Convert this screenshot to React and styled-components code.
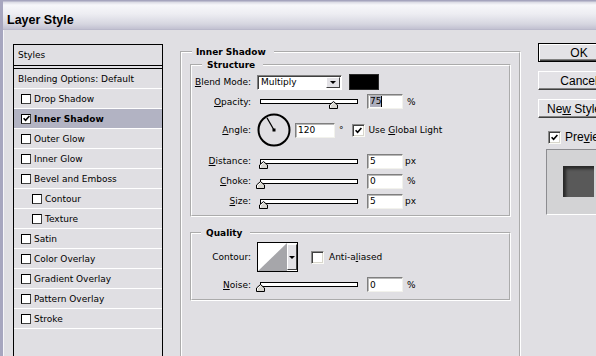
import React from "react";
import styled, { createGlobalStyle } from "styled-components";

const GlobalStyle = createGlobalStyle`
  html, body { margin: 0; padding: 0; background: #e0dfe3; }
  body {
    overflow: hidden;
    font-family: "DejaVu Sans", "Liberation Sans", sans-serif;
    font-size: 9px;
    color: #000;
  }
`;

const Window = styled.div`
  width: 596px;
  height: 356px;
  box-sizing: border-box;
  overflow: hidden;
  display: flex;
  flex-direction: column;
  background: #e0dfe3;
  border-left: 3px solid #a7a6bf;
`;

const TitleBar = styled.div`
  flex: none;
  height: 30px;
  box-sizing: border-box;
  padding: 13px 0 0 4px;
  background: linear-gradient(
    180deg,
    #a5a4bd 0px,
    #a5a4bd 1px,
    #d9d9e3 2px,
    #f7f7fa 5px,
    #ededf2 14px,
    #d6d6e0 24px,
    #c2c1d1 29px,
    #b2b1c4 30px
  );
  font: bold 12.5px/14px "Liberation Sans", Arial, sans-serif;
  color: #000;
`;

const Body = styled.div`
  flex: 1;
  min-height: 0;
  display: flex;
  align-items: flex-start;
  gap: 17px;
  padding: 14px 0 0 10px;
  box-shadow: inset 1px 0 0 #f6f6f9;
`;

/* ---------- left style list ---------- */

const Panel = styled.div`
  flex: none;
  width: 150px;
  height: 330px;
  box-sizing: border-box;
  border: 1px solid #000;
  display: flex;
  flex-direction: column;
`;

const PanelHeader = styled.div`
  flex: none;
  height: 21px;
  box-sizing: border-box;
  border-bottom: 1px solid #000;
  margin-bottom: 2px;
  display: flex;
  align-items: center;
  padding-left: 4px;
`;

const BlendRow = styled.div`
  flex: none;
  height: 21px;
  box-sizing: border-box;
  border-top: 1px solid #000;
  border-bottom: 1px solid #fff;
  display: flex;
  align-items: center;
  padding-left: 4px;
`;

const StyleRow = styled.div`
  flex: none;
  height: 20px;
  box-sizing: border-box;
  border-bottom: 1px solid #fff;
  display: flex;
  align-items: center;
  gap: 3px;
  padding-left: ${(p) => (p.$sub ? 18 : 7)}px;
  background: ${(p) => (p.$selected ? "#b2b3c3" : "transparent")};
  font-weight: ${(p) => (p.$selected ? "bold" : "normal")};
`;

const ListBox = styled.span`
  flex: none;
  width: 10px;
  height: 10px;
  box-sizing: border-box;
  border: 1px solid #000;
  border-right-color: #404040;
  border-bottom-color: #404040;
  background: #fff;
  display: flex;
  align-items: center;
  justify-content: center;
`;

const CheckMark = () => (
  <svg width="7" height="7" viewBox="0 0 7 7">
    <path d="M0.6 3.2 L2.6 5.3 L6.4 1.0" fill="none" stroke="#000" strokeWidth="1.6" />
  </svg>
);

/* ---------- fieldsets ---------- */

const Group = styled.fieldset`
  flex: none;
  width: ${(p) => p.$w}px;
  ${(p) => (p.$h ? `height: ${p.$h}px;` : "")}
  box-sizing: border-box;
  min-width: 0;
  margin: ${(p) => p.$mt || 0}px 0 0;
  padding: ${(p) => p.$pad};
  border: 2px groove #fff;
  display: flex;
  flex-direction: column;
`;

const Legend = styled.legend`
  font-weight: bold;
  line-height: 12px;
  padding: 0 8px 0 ${(p) => p.$pl}px;
  margin-left: ${(p) => p.$ml}px;
`;

const Row = styled.div`
  flex: none;
  height: ${(p) => p.$h}px;
  margin-top: ${(p) => p.$mt || 0}px;
  display: flex;
  align-items: center;
`;

const Label = styled.span`
  flex: none;
  width: 59px;
  margin-right: 6px;
  text-align: right;
  white-space: nowrap;
`;

const Key = styled.u`
  text-decoration: underline;
  text-underline-offset: 1px;
`;

const Select = styled.div`
  flex: none;
  width: 85px;
  height: 15px;
  box-sizing: border-box;
  display: flex;
  align-items: stretch;
  background: #fff;
  border: 1px solid;
  border-color: #808080 #fff #fff #808080;
  box-shadow: inset 1px 1px 0 #404040;
`;

const SelectText = styled.span`
  flex: 1;
  display: flex;
  align-items: center;
  padding-left: 3px;
`;

const DropButton = styled.span`
  flex: none;
  width: ${(p) => p.$w || 14}px;
  box-sizing: border-box;
  margin: 1px 1px 1px 0;
  background: #e3e2e6;
  border: 1px solid;
  border-color: #fff #404040 #404040 #fff;
  display: flex;
  align-items: center;
  justify-content: center;
`;

const Arrow = styled.span`
  width: 0;
  height: 0;
  border-left: 3px solid transparent;
  border-right: 3px solid transparent;
  border-top: 3px solid #000;
`;

const ColorSwatch = styled.span`
  flex: none;
  width: 30px;
  height: 16px;
  margin-left: 7px;
  box-sizing: border-box;
  background: #000;
  border: 1px solid #2a2a2a;
`;

const SliderWrap = styled.div`
  flex: none;
  position: relative;
  width: 104px;
  height: 15px;
`;

const Track = styled.div`
  margin: 5px 3px 0;
  height: 5px;
  box-sizing: border-box;
  border: 1px solid #000;
  background: #fff;
`;

const ThumbSvg = styled.svg`
  position: absolute;
  top: 7px;
`;

const Field = styled.div`
  flex: none;
  width: ${(p) => p.$w}px;
  height: 15px;
  margin-left: ${(p) => p.$ml}px;
  box-sizing: border-box;
  background: #fff;
  border: 1px solid;
  border-color: #7f7f7f #f2f2ec #f2f2ec #7f7f7f;
  box-shadow: inset 1px 1px 0 #b8b8b8;
  display: flex;
  align-items: center;
  padding-left: 2px;
`;

const Selected = styled.span`
  background: #aeafbd;
  line-height: 11px;
`;

const Caret = styled.span`
  width: 1px;
  height: 11px;
  background: #000;
`;

const Unit = styled.span`
  margin-left: ${(p) => p.$ml}px;
`;

const WinCheck = styled.span`
  flex: none;
  width: 13px;
  height: 13px;
  margin-left: ${(p) => p.$ml || 0}px;
  box-sizing: border-box;
  background: #fff;
  border: 1px solid;
  border-color: #8a8a8a #fbfbf6 #fbfbf6 #8a8a8a;
  box-shadow: inset 1px 1px 0 #404040, inset -1px -1px 0 #d8d6cc;
  display: flex;
  align-items: center;
  justify-content: center;
`;

const CheckText = styled.span`
  margin-left: ${(p) => p.$ml}px;
  white-space: nowrap;
`;

const ContourBox = styled.div`
  flex: none;
  width: 41px;
  height: 30px;
  box-sizing: border-box;
  border: 1px solid #000;
  display: flex;
  background: #fff;
`;

const ContourThumb = styled.svg`
  flex: none;
  display: block;
`;

/* ---------- right column ---------- */

const Side = styled.div`
  flex: none;
  width: 82px;
  margin-top: -1px;
  display: flex;
  flex-direction: column;
`;

const Button = styled.button`
  flex: none;
  height: 19px;
  width: 82px;
  padding: 0;
  margin: ${(p) => (p.$first ? 0 : 9)}px 0 0;
  box-sizing: border-box;
  display: flex;
  align-items: center;
  justify-content: center;
  white-space: nowrap;
  font: 12px "Liberation Sans", Arial, sans-serif;
  color: #000;
  background: #e3e2e6;
  border: 1px solid;
  border-color: ${(p) => (p.$default ? "#000" : "#fff #404040 #404040 #fff")};
  box-shadow: ${(p) =>
    p.$default
      ? "inset 1px 1px 0 #fff, inset -1px -1px 0 #404040, inset -2px -2px 0 #808080"
      : "inset -1px -1px 0 #808080"};
`;

const PreviewRow = styled.div`
  flex: none;
  display: flex;
  align-items: center;
  margin: 12px 0 0 10px;
  font: 12px "Liberation Sans", Arial, sans-serif;
`;

const PreviewBox = styled.div`
  flex: none;
  margin: 5px 0 0 8px;
  width: 66px;
  height: 66px;
  box-sizing: border-box;
  border: 1px solid;
  border-color: #8c8c90 #fff #fff #8c8c90;
  background: #d3d3d5;
  padding: 16px 0 0 16px;
`;

const PreviewSquare = styled.div`
  width: 31px;
  height: 31px;
  background: #595959;
  box-shadow: inset 3px 3px 3px rgba(0, 0, 0, 0.55);
`;

/* ---------- parts ---------- */

const Slider = ({ pct }) => (
  <SliderWrap>
    <Track />
    <ThumbSvg width="9" height="8" viewBox="0 0 9 8" style={{ left: 3 + pct * 98 - 4.5 }}>
      <path d="M4.5 0.5 L8.5 4 L8.5 7.5 L0.5 7.5 L0.5 4 Z" fill="#d8d6d0" stroke="#000" strokeWidth="1" />
      <path d="M4.5 1.8 L1.5 4.4 L1.5 6.5" fill="none" stroke="#fff" strokeWidth="1" />
    </ThumbSvg>
  </SliderWrap>
);

const Dial = ({ angle }) => {
  const r = (angle * Math.PI) / 180;
  const c = 17;
  return (
    <svg width="34" height="34" viewBox="0 0 34 34" style={{ flex: "none" }}>
      <circle cx={c} cy={c} r="15.5" fill="none" stroke="#000" strokeWidth="2" />
      <line x1={c} y1={c} x2={c + 14 * Math.cos(r)} y2={c - 14 * Math.sin(r)} stroke="#000" strokeWidth="1.2" />
      <rect x={c - 1.5} y={c - 1.5} width="3" height="3" fill="#000" />
    </svg>
  );
};

const styleItems = [
  { name: "Drop Shadow" },
  { name: "Inner Shadow", checked: true, selected: true },
  { name: "Outer Glow" },
  { name: "Inner Glow" },
  { name: "Bevel and Emboss" },
  { name: "Contour", sub: true },
  { name: "Texture", sub: true },
  { name: "Satin" },
  { name: "Color Overlay" },
  { name: "Gradient Overlay" },
  { name: "Pattern Overlay" },
  { name: "Stroke" },
];

const SliderRow = ({ k, rest, pct, value, unit, unitMl, mt, h = 20 }) => (
  <Row $h={h} $mt={mt}>
    <Label>
      <Key>{k}</Key>
      {rest}
    </Label>
    <Slider pct={pct} />
    <Field $w={36} $ml={6}>{value}</Field>
    <Unit $ml={unitMl}>{unit}</Unit>
  </Row>
);

export default function App() {
  return (
    <>
      <GlobalStyle />
      <Window>
        <TitleBar>Layer Style</TitleBar>
        <Body>
          <Panel>
            <PanelHeader>Styles</PanelHeader>
            <BlendRow>Blending Options: Default</BlendRow>
            {styleItems.map((s) => (
              <StyleRow key={s.name} $sub={s.sub} $selected={s.selected}>
                <ListBox>{s.checked && <CheckMark />}</ListBox>
                {s.name}
              </StyleRow>
            ))}
          </Panel>

          <Group $w={341} $h={330} $mt={2} $pad="1px 8px 0 8px">
            <Legend $ml={2} $pl={4}>Inner Shadow</Legend>

            <Group $w={321} $pad="3px 0 4px 0">
              <Legend $ml={10} $pl={5}>Structure</Legend>
              <Row $h={16}>
                <Label>
                  <Key>B</Key>lend Mode:
                </Label>
                <Select>
                  <SelectText>Multiply</SelectText>
                  <DropButton>
                    <Arrow />
                  </DropButton>
                </Select>
                <ColorSwatch />
              </Row>
              <Row $h={23}>
                <Label>
                  <Key>O</Key>pacity:
                </Label>
                <Slider pct={0.75} />
                <Field $w={36} $ml={6}>
                  <Selected>75</Selected>
                  <Caret />
                </Field>
                <Unit $ml={4}>%</Unit>
              </Row>
              <Row $h={34}>
                <Label>
                  <Key>A</Key>ngle:
                </Label>
                <Dial angle={120} />
                <Field $w={40} $ml={4}>120</Field>
                <Unit $ml={4}>°</Unit>
                <WinCheck $ml={8}>
                  <CheckMark />
                </WinCheck>
                <CheckText $ml={4}>
                  Use <Key>G</Key>lobal Light
                </CheckText>
              </Row>
              <SliderRow k="D" rest="istance:" pct={0.04} value="5" unit="px" unitMl={2} mt={4} />
              <SliderRow k="C" rest="hoke:" pct={0} value="0" unit="%" unitMl={4} />
              <SliderRow k="S" rest="ize:" pct={0.04} value="5" unit="px" unitMl={2} />
            </Group>

            <Group $w={321} $mt={10} $pad="3px 0 2px 0">
              <Legend $ml={9} $pl={5}>Quality</Legend>
              <Row $h={30}>
                <Label>Contour:</Label>
                <ContourBox>
                  <ContourThumb width="29" height="28" viewBox="0 0 29 28">
                    <rect width="29" height="28" fill="#fff" />
                    <polygon points="0,28 29,0 29,28" fill="#a6a6aa" />
                  </ContourThumb>
                  <DropButton $w={10}>
                    <Arrow />
                  </DropButton>
                </ContourBox>
                <WinCheck $ml={13} />
                <CheckText $ml={5}>
                  Anti-a<Key>l</Key>iased
                </CheckText>
              </Row>
              <SliderRow k="N" rest="oise:" pct={0} value="0" unit="%" unitMl={4} h={25} />
            </Group>
          </Group>

          <Side>
            <Button $first $default>OK</Button>
            <Button>Cancel</Button>
            <Button>
              Ne<Key>w</Key>&nbsp;Style...
            </Button>
            <PreviewRow>
              <WinCheck>
                <CheckMark />
              </WinCheck>
              <CheckText $ml={4}>
                Pre<Key>v</Key>iew
              </CheckText>
            </PreviewRow>
            <PreviewBox>
              <PreviewSquare />
            </PreviewBox>
          </Side>
        </Body>
      </Window>
    </>
  );
}
